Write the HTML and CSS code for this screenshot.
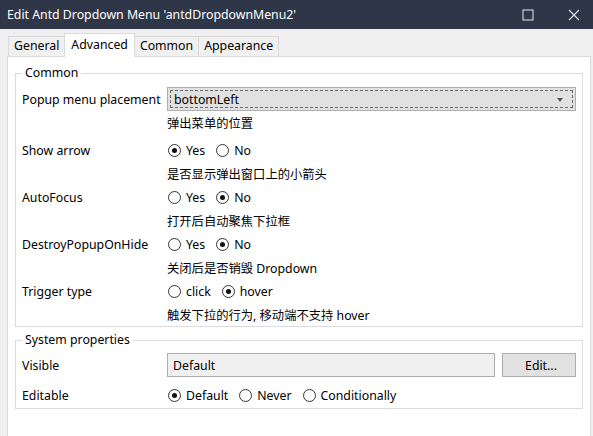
FILE: index.html
```html
<!DOCTYPE html>
<html>
<head>
<meta charset="utf-8">
<link rel="stylesheet" href="styles.css">
</head>
<body>
<div class="window">
  <div class="titlebar">
    <span class="title">Edit Antd Dropdown Menu 'antdDropdownMenu2'</span>
    <div class="wincontrols">
      <svg class="wc" width="12" height="12" viewBox="0 0 12 12"><rect x="1" y="1" width="10" height="10" fill="none" stroke="#c8cbd2" stroke-width="1.2"/></svg>
      <svg class="wc" width="12" height="12" viewBox="0 0 12 12"><path d="M1 1L11 11M11 1L1 11" stroke="#e0e2e6" stroke-width="1.2"/></svg>
    </div>
  </div>
  <div class="tabs">
    <div class="tab">General</div>
    <div class="tab active">Advanced</div>
    <div class="tab">Common</div>
    <div class="tab">Appearance</div>
  </div>
  <div class="panel">
    <fieldset class="group">
      <legend>Common</legend>
      <div class="prop first">
        <div class="label">Popup menu placement</div>
        <div class="select"><span class="focus">bottomLeft</span><span class="caret"></span></div>
        <div class="desc">弹出菜单的位置</div>
      </div>
      <div class="prop">
        <div class="label">Show arrow</div>
        <div class="radios">
          <span class="radio on"></span><span class="rl">Yes</span>
          <span class="radio"></span><span class="rl">No</span>
        </div>
        <div class="desc">是否显示弹出窗口上的小箭头</div>
      </div>
      <div class="prop">
        <div class="label">AutoFocus</div>
        <div class="radios">
          <span class="radio"></span><span class="rl">Yes</span>
          <span class="radio on"></span><span class="rl">No</span>
        </div>
        <div class="desc">打开后自动聚焦下拉框</div>
      </div>
      <div class="prop">
        <div class="label">DestroyPopupOnHide</div>
        <div class="radios">
          <span class="radio"></span><span class="rl">Yes</span>
          <span class="radio on"></span><span class="rl">No</span>
        </div>
        <div class="desc">关闭后是否销毁 Dropdown</div>
      </div>
      <div class="prop">
        <div class="label">Trigger type</div>
        <div class="radios">
          <span class="radio"></span><span class="rl">click</span>
          <span class="radio on"></span><span class="rl">hover</span>
        </div>
        <div class="desc">触发下拉的行为, 移动端不支持 hover</div>
      </div>
    </fieldset>
    <fieldset class="group sys">
      <legend>System properties</legend>
      <div class="sysrow">
        <div class="label">Visible</div>
        <div class="inputline">
          <div class="input">Default</div>
          <div class="btn">Edit...</div>
        </div>
      </div>
      <div class="sysrow">
        <div class="label">Editable</div>
        <div class="radios">
          <span class="radio on"></span><span class="rl">Default</span>
          <span class="radio"></span><span class="rl">Never</span>
          <span class="radio"></span><span class="rl">Conditionally</span>
        </div>
      </div>
    </fieldset>
  </div>
</div>
</body>
</html>
```

FILE: styles.css
```css
* { box-sizing: border-box; }
html, body { margin: 0; padding: 0; }
body {
  width: 593px;
  height: 436px;
  overflow: hidden;
  background: #f0f0f0;
  font-family: "Noto Sans", "Noto Sans CJK SC", sans-serif;
  font-size: 12.3px;
  color: #000;
}
.window {
  display: flex;
  flex-direction: column;
  height: 436px;
}
.titlebar {
  height: 29px;
  background: #2f3647;
  color: #fff;
  display: flex;
  align-items: center;
  justify-content: space-between;
  padding-left: 7px;
  flex: none;
}
.title { font-size: 12.3px; }
.wincontrols {
  display: flex;
  align-items: center;
  gap: 34px;
  padding-right: 13px;
}
.wc { display: block; }
.tabs {
  height: 27px;
  display: flex;
  align-items: flex-end;
  padding-left: 8px;
  flex: none;
  position: relative;
  z-index: 1;
}
.tab {
  height: 20px;
  line-height: 18px;
  padding: 0 5px;
  border: 1px solid #d9d9d9;
  border-bottom: none;
  background: #f0f0f0;
  margin-right: -1px;
}
.tab.active {
  height: 24px;
  line-height: 21px;
  background: #fff;
  margin-bottom: -1px;
  padding: 0 6px;
  position: relative;
  z-index: 2;
}
.panel {
  flex: 1;
  margin: 0 2px 0 7px;
  background: #fff;
  border: 1px solid #d9d9d9;
  border-bottom: none;
  padding: 7px 7px 0 7px;
}
.group {
  margin: 0;
  border: 1px solid #dcdcdc;
  padding: 0 6px 0 6px;
  min-width: 0;
}
.group legend {
  padding: 0 3px;
  line-height: 18px;
}
.prop {
  display: grid;
  grid-template-columns: 145px 1fr;
  grid-template-rows: 24px 23px;
  align-items: center;
}
.prop.first {
  margin-top: 5px;
  margin-bottom: 4px;
}
.prop .desc { grid-column: 2; }
.label { white-space: nowrap; }
.select {
  height: 24px;
  background: #e1e1e1;
  border: 1px solid #adadad;
  padding: 2px;
  display: flex;
  align-items: stretch;
  position: relative;
}
.select .focus {
  flex: 1;
  border: 1px dashed #6a6a6a;
  display: flex;
  align-items: center;
  padding-left: 3px;
}
.select .caret {
  position: absolute;
  right: 12px;
  top: 10px;
  width: 0;
  height: 0;
  border-left: 3.5px solid transparent;
  border-right: 3.5px solid transparent;
  border-top: 4px solid #555;
}
.radios {
  display: flex;
  align-items: center;
}
.radio {
  width: 13px;
  height: 13px;
  border: 1px solid #333;
  border-radius: 50%;
  display: inline-flex;
  align-items: center;
  justify-content: center;
  margin-left: 1px;
  margin-right: 5px;
  flex: none;
}
.radio.on::after {
  content: "";
  width: 5px;
  height: 5px;
  border-radius: 50%;
  background: #111;
}
.rl { margin-right: 10px; }
.sys { margin-top: 4px; padding-bottom: 1px; }
.sysrow {
  display: grid;
  grid-template-columns: 145px 1fr;
  align-items: center;
  height: 24px;
}
.sysrow:first-of-type { margin-top: 4px; }
.sysrow + .sysrow { margin-top: 6px; }
.inputline {
  display: flex;
  gap: 7px;
}
.input {
  flex: 1;
  height: 24px;
  background: #f0f0f0;
  border: 1px solid #adadad;
  display: flex;
  align-items: center;
  padding-left: 5px;
}
.btn {
  width: 74px;
  height: 24px;
  background: #e1e1e1;
  border: 1px solid #adadad;
  display: flex;
  align-items: center;
  justify-content: center;
  padding-left: 4px;
}
```
